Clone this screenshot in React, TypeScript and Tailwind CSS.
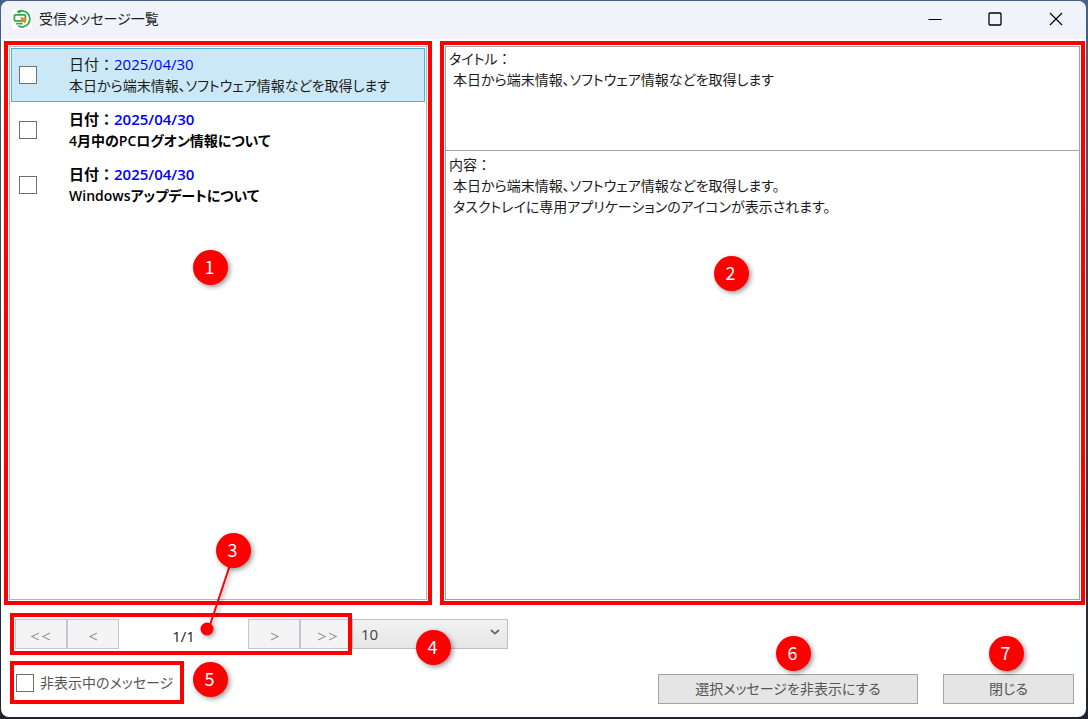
import { useState } from "react";
import type { ReactNode } from "react";

type Message = { id: number; date: string; title: string; body: string[]; unread: boolean };

const messages: Message[] = [
  {
    id: 1,
    date: "2025/04/30",
    title: "本日から端末情報、ソフトウェア情報などを取得します",
    body: [
      "本日から端末情報、ソフトウェア情報などを取得します。",
      "タスクトレイに専用アプリケーションのアイコンが表示されます。",
    ],
    unread: false,
  },
  { id: 2, date: "2025/04/30", title: "4月中のPCログオン情報について", body: [], unread: true },
  { id: 3, date: "2025/04/30", title: "Windowsアップデートについて", body: [], unread: true },
];

function Badge({ n, className }: { n: number; className: string }) {
  return (
    <span
      className={`absolute z-10 flex size-[35px] items-center justify-center rounded-full bg-[#ff0000] pr-0.5 pb-1 font-['Noto_Sans_CJK_JP',sans-serif] text-lg leading-none text-white shadow-[2px_2px_5px_rgba(0,0,0,0.4)] ${className}`}
    >
      {n}
    </span>
  );
}

function CheckBox({ id }: { id: string }) {
  return (
    <input
      id={id}
      type="checkbox"
      className="size-[18px] shrink-0 appearance-none border border-[#707070] bg-white checked:bg-[#26a0da]"
    />
  );
}

function PageButton({ label, last, children }: { label: string; last?: boolean; children: ReactNode }) {
  return (
    <button
      type="button"
      disabled
      aria-label={label}
      className={`h-[30px] border border-[#c3c7cb] bg-[#f4f4f4] text-[#9a9a9a] ${last ? "w-12 border-r-0 pl-1" : "w-[52px]"}`}
    >
      {children}
    </button>
  );
}

function Chevrons({ count, right }: { count: number; right?: boolean }) {
  return (
    <svg
      viewBox={`0 0 ${count * 11 - 2} 9`}
      className={`mx-auto mt-1 h-[9px] ${count === 2 ? "w-5" : "w-[9px]"}`}
      fill="none"
      stroke="currentColor"
      strokeWidth="1.2"
    >
      {Array.from({ length: count }, (_, i) => (
        <path
          key={i}
          d={right ? `M${i * 11 + 1} 1 L${i * 11 + 8} 4.5 L${i * 11 + 1} 8` : `M${i * 11 + 8} 1 L${i * 11 + 1} 4.5 L${i * 11 + 8} 8`}
        />
      ))}
    </svg>
  );
}

function AppIcon() {
  return (
    <svg viewBox="0 0 20 20" className="size-5" fill="none">
      <rect width="20" height="20" rx="2" fill="#fff" />
      <path d="M5.5 3.2 A8 8 0 1 1 6.2 17" stroke="#2fa84f" strokeWidth="1.8" />
      <path d="M4.5 2.2 L9.5 0.4 L8 5 Z" fill="#2fa84f" />
      <rect x="2.4" y="5.8" width="11" height="6" rx="1" stroke="#2fa84f" strokeWidth="1.8" fill="#fff" />
      <path d="M4.2 14.6 H10.5" stroke="#2fa84f" strokeWidth="1.8" />
      <path d="M8.4 7.8 L15 10 L12.6 11.2 L14 13.4 L12.6 14.4 L11.2 12.2 L9.6 13.8 Z" fill="#f58220" />
    </svg>
  );
}

export default function App() {
  const [selectedId, setSelectedId] = useState(1);
  const selected = messages.find((m) => m.id === selectedId) ?? messages[0];

  return (
    <div className="flex min-h-screen flex-col bg-linear-to-b from-[#4a6088] to-[#20242c] px-px pt-px pb-[2px] font-['Open_Sans','Noto_Sans_CJK_JP',sans-serif] text-[15px] leading-[21px] text-[#1c1c1c]">
      <div className="mr-px flex flex-1 flex-col overflow-hidden rounded-lg bg-white">
        <header className="flex h-[38px] items-center bg-[#f0f3fa] pb-0.5 pl-[11px]">
          <AppIcon />
          <h1 className="ml-[7px] flex-1 text-sm [font-feature-settings:'palt']">受信メッセージ一覧</h1>
          <button type="button" aria-label="最小化" className="grid h-full w-[60px] place-items-center">
            <svg viewBox="0 0 14 14" className="size-3.5" stroke="#000">
              <path d="M0.5 7.5 H13.5" />
            </svg>
          </button>
          <button type="button" aria-label="最大化" className="grid h-full w-[60px] place-items-center">
            <svg viewBox="0 0 14 14" className="size-3.5" stroke="#000" strokeWidth="1.3" fill="none">
              <rect x="1" y="1" width="12" height="12" rx="1" />
            </svg>
          </button>
          <button type="button" aria-label="閉じる" className="grid h-full w-[61px] place-items-center">
            <svg viewBox="0 0 14 14" className="size-3.5" stroke="#000" strokeWidth="1.2">
              <path d="M1 1 L13 13 M13 1 L1 13" />
            </svg>
          </button>
        </header>

        <main className="grid flex-1 grid-cols-[428fr_645fr] gap-2 pt-0.5 pr-px pl-[3px]">
          <section className="relative flex border-4 border-[#ff0000] p-px">
            <ul className="flex-1 border border-[#b4b8be] p-px">
              {messages.map((m) => (
                <li
                  key={m.id}
                  onClick={() => setSelectedId(m.id)}
                  className={`mb-px flex h-[54px] items-center border pl-[7px] ${
                    m.id === selectedId ? "border-[#4fb0de] bg-[#cbe8f6]" : "border-transparent"
                  }`}
                >
                  <CheckBox id={`message-${m.id}`} />
                  <label
                    htmlFor={`message-${m.id}`}
                    className={`ml-8 whitespace-nowrap ${m.unread ? "font-semibold text-black" : ""}`}
                  >
                    <span className="block">
                      日付：<span className="text-[#0000ff]">{m.date}</span>
                    </span>
                    <span className="block text-sm leading-[21px] [font-feature-settings:'palt']">{m.title}</span>
                  </label>
                </li>
              ))}
            </ul>
            <Badge n={1} className="top-[205px] left-[185px]" />
          </section>

          <section className="relative flex flex-col border-4 border-[#ff0000] p-px text-sm leading-[21px]">
            <div className="h-[105px] border border-[#a0a0a0] px-[3px] pt-px">
              <h2>
                <span className="[font-feature-settings:'palt']">タイトル</span>：
              </h2>
              <p className="pl-1 [font-feature-settings:'palt']">{selected.title}</p>
            </div>
            <div className="-mt-px flex-1 border border-[#a0a0a0] px-[3px] pt-[3px]">
              <h2>内容：</h2>
              {selected.body.map((line) => (
                <p key={line} className="pl-1 [font-feature-settings:'palt']">
                  {line}
                </p>
              ))}
            </div>
            <Badge n={2} className="top-[211px] left-[270px]" />
          </section>
        </main>

        <footer className="flex items-end justify-between pt-2 pr-3 pb-[13px] pl-[9px]">
          <div className="flex flex-col gap-1.5">
            <div className="flex items-center">
              <nav aria-label="ページ送り" className="relative flex h-[42px] w-[342px] items-center border-4 border-[#ff0000] pl-px">
                <PageButton label="最初のページ">
                  <Chevrons count={2} />
                </PageButton>
                <PageButton label="前のページ">
                  <Chevrons count={1} />
                </PageButton>
                <span className="flex-1 pt-1 text-center">1/1</span>
                <PageButton label="次のページ">
                  <Chevrons count={1} right />
                </PageButton>
                <PageButton label="最後のページ" last>
                  <Chevrons count={2} right />
                </PageButton>
                <svg viewBox="0 0 50 100" className="absolute -top-[66px] left-[182px] z-10 h-[100px] w-[50px] drop-shadow-[2px_2px_2px_rgba(0,0,0,0.35)]">
                  <path d="M37 5 L11 83" stroke="#f00" strokeWidth="2" />
                  <circle cx="11" cy="78" r="6.5" fill="#f00" />
                </svg>
                <Badge n={3} className="-top-[84px] left-[202px]" />
              </nav>
              <div className="relative">
                <select
                  aria-label="表示件数"
                  className="block h-[30px] w-[156px] appearance-none border border-[#bfbfbf] bg-linear-to-b from-[#f2f2f2] to-[#e6e6e6] pl-2 text-[#444]"
                >
                  <option>10</option>
                  <option>20</option>
                  <option>50</option>
                </select>
                <svg viewBox="0 0 10 6" className="pointer-events-none absolute top-2.5 right-2 h-1.5 w-2.5" fill="none" stroke="#666" strokeWidth="1.8">
                  <path d="M1 1 L5 4.6 L9 1" />
                </svg>
                <Badge n={4} className="top-[11px] left-16" />
              </div>
            </div>
            <div className="relative flex h-[43px] w-[174px] items-center border-4 border-[#ff0000] pl-0.5 text-sm text-[#555]">
              <CheckBox id="hidden-messages" />
              <label htmlFor="hidden-messages" className="ml-1.5 whitespace-nowrap [font-feature-settings:'palt']">
                非表示中のメッセージ
              </label>
              <Badge n={5} className="-top-[3px] left-[179px]" />
            </div>
          </div>
          <div className="flex gap-[25px] text-sm text-[#555]">
            <div className="relative">
              <button type="button" className="block h-[30px] w-[260px] border border-[#a0a5a3] bg-[#e5e5e5] [font-feature-settings:'palt']">
                選択メッセージを非表示にする
              </button>
              <Badge n={6} className="-top-[38px] left-[118px]" />
            </div>
            <div className="relative">
              <button type="button" className="block h-[30px] w-[131px] border border-[#a0a5a3] bg-[#e5e5e5] [font-feature-settings:'palt']">
                閉じる
              </button>
              <Badge n={7} className="-top-[38px] left-[46px]" />
            </div>
          </div>
        </footer>
      </div>
    </div>
  );
}
